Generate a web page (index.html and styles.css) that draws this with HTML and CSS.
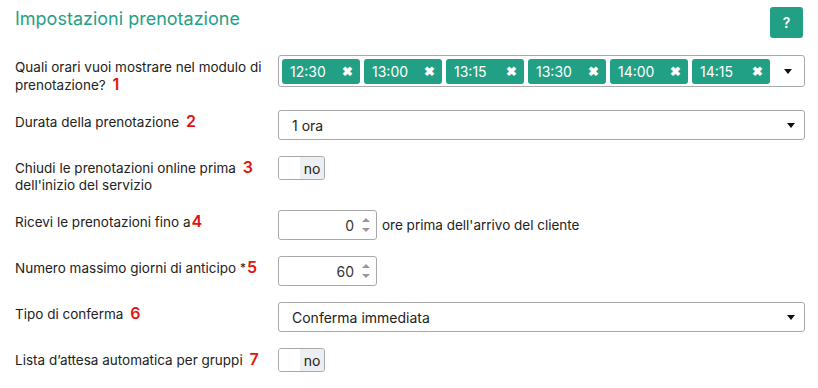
FILE: index.html
```html
<!DOCTYPE html>
<html>
<head>
    <meta charset="utf-8">
    <title>Impostazioni prenotazione</title>
    <link rel="stylesheet" href="styles.css">
</head>
<body>
<div class="panel">
    <div class="panel-head">
        <h1 class="title">Impostazioni prenotazione</h1>
        <button class="help">?</button>
    </div>

    <div class="row">
        <label class="label label-first">Quali orari vuoi mostrare nel modulo di<br>prenotazione? <span class="num">1</span></label>
        <div class="field">
            <div class="multi">
                <span class="tag">12:30 <i class="x">&#10006;</i></span>
                <span class="tag">13:00 <i class="x">&#10006;</i></span>
                <span class="tag">13:15 <i class="x">&#10006;</i></span>
                <span class="tag">13:30 <i class="x">&#10006;</i></span>
                <span class="tag">14:00 <i class="x">&#10006;</i></span>
                <span class="tag">14:15 <i class="x">&#10006;</i></span>
                <span class="caret"></span>
            </div>
        </div>
    </div>

    <div class="row">
        <label class="label">Durata della prenotazione <span class="num">2</span></label>
        <div class="field">
            <div class="select">1 ora <span class="caret"></span></div>
        </div>
    </div>

    <div class="row">
        <label class="label">Chiudi le prenotazioni online prima <span class="num">3</span><br>dell'inizio del servizio</label>
        <div class="field">
            <div class="toggle"><span class="knob"></span><span class="off">no</span></div>
        </div>
    </div>

    <div class="row">
        <label class="label">Ricevi le prenotazioni fino a<span class="num tight">4</span></label>
        <div class="field inline">
            <div class="number">0 <span class="spin"><b class="up"></b><b class="down"></b></span></div>
            <span class="after">ore prima dell'arrivo del cliente</span>
        </div>
    </div>

    <div class="row">
        <label class="label">Numero massimo giorni di anticipo <span class="star">*</span><span class="num tight">5</span></label>
        <div class="field">
            <div class="number">60 <span class="spin"><b class="up"></b><b class="down"></b></span></div>
        </div>
    </div>

    <div class="row">
        <label class="label">Tipo di conferma <span class="num">6</span></label>
        <div class="field">
            <div class="select">Conferma immediata <span class="caret"></span></div>
        </div>
    </div>

    <div class="row">
        <label class="label">Lista d&#8217;attesa automatica per gruppi <span class="num">7</span></label>
        <div class="field">
            <div class="toggle"><span class="knob"></span><span class="off">no</span></div>
        </div>
    </div>
</div>
</body>
</html>
```

FILE: styles.css
```css
html {
    background: #fff;
}

body {
    margin: 0;
    color: #222;
    font-family: "Inter", "Liberation Sans", sans-serif;
    font-size: 13.5px;
}

.panel {
    padding: 7px 13px 0 15px;
}

.panel-head {
    display: flex;
    justify-content: space-between;
    align-items: flex-start;
    margin-bottom: 17px;
}

.title {
    margin: 0;
    padding-top: 1px;
    font-size: 18px;
    font-weight: 400;
    line-height: 22px;
    color: #25a088;
}

.help {
    width: 33px;
    height: 31px;
    margin-right: 2px;
    border: none;
    border-radius: 3px;
    background: #22a085;
    color: #fff;
    font-family: "Inter", "Liberation Sans", sans-serif;
    font-size: 14px;
    font-weight: 600;
    padding: 0;
}

.row {
    display: grid;
    grid-template-columns: 263px 1fr;
    margin-bottom: 16px;
}

.label {
    padding-top: 3px;
    line-height: 17px;
    padding-right: 10px;
}

.label-first {
    padding-top: 4px;
}

.num {
    color: #e3130f;
    font-size: 16px;
    line-height: 1;
    font-weight: 600;
    margin-left: 3px;
}

.num.tight {
    margin-left: 1px;
}

.star {
    font-size: 12px;
    line-height: 1;
    position: relative;
    top: -1px;
}

.multi {
    display: flex;
    align-items: center;
    gap: 4px;
    height: 32px;
    padding: 0 3px;
    border: 1px solid #a8a8a8;
    border-radius: 3px;
    box-sizing: border-box;
}

.tag {
    display: flex;
    justify-content: space-between;
    align-items: center;
    width: 78px;
    height: 25px;
    padding: 0 7px 0 8px;
    box-sizing: border-box;
    background: #22a085;
    border-radius: 3px;
    color: #fff;
    font-size: 14px;
}

.x {
    font-style: normal;
    font-size: 13px;
    font-weight: 700;
}

.caret {
    width: 0;
    height: 0;
    border-left: 4px solid transparent;
    border-right: 4px solid transparent;
    border-top: 5px solid #111;
    margin-left: auto;
    margin-right: 9px;
}

.select {
    display: flex;
    align-items: center;
    height: 30px;
    padding-left: 13px;
    border: 1px solid #a8a8a8;
    border-radius: 3px;
    box-sizing: border-box;
    font-size: 14px;
}

.toggle {
    display: flex;
    width: 47px;
    height: 24px;
    border: 1px solid #a8a8a8;
    border-radius: 3px;
    box-sizing: border-box;
    overflow: hidden;
}

.knob {
    width: 21px;
    background: #fff;
}

.off {
    flex: 1;
    background: #ebeef2;
    display: flex;
    align-items: center;
    justify-content: center;
    font-size: 14px;
}

.inline {
    display: flex;
    align-items: center;
    gap: 5px;
}

.number {
    display: flex;
    justify-content: flex-end;
    align-items: center;
    width: 99px;
    height: 30px;
    padding-right: 6px;
    border: 1px solid #a8a8a8;
    border-radius: 3px;
    box-sizing: border-box;
    font-size: 14px;
    color: #333;
}

.spin {
    display: flex;
    flex-direction: column;
    gap: 6px;
    margin-left: 8px;
}

.spin b {
    width: 0;
    height: 0;
    border-left: 4px solid transparent;
    border-right: 4px solid transparent;
}

.up {
    border-bottom: 4px solid #999;
}

.down {
    border-top: 4px solid #999;
}

.after {
    font-size: 13.5px;
}
```
